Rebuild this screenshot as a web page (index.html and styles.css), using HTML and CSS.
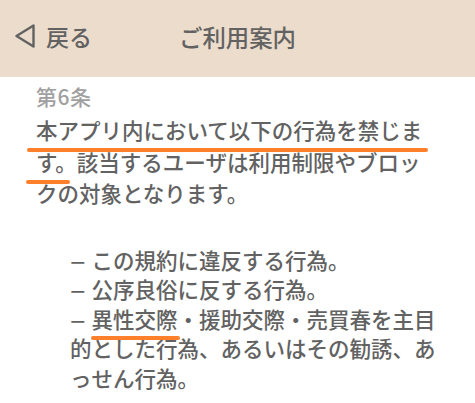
FILE: index.html
```html
<!DOCTYPE html>
<html lang="ja">
<head>
<meta charset="utf-8">
<link rel="stylesheet" href="styles.css">
</head>
<body>
<div class="screen">
  <header class="bar">
    <div class="back">
      <svg class="back-icon" width="22" height="26" viewBox="0 0 22 26"><path d="M19.5 2.5 L2.5 13 L19.5 23.5 Z" fill="none" stroke="#626262" stroke-width="2.4" stroke-linejoin="round"/></svg>
      <span class="back-label">戻る</span>
    </div>
    <div class="title">ご利用案内</div>
  </header>
  <main class="content">
    <div class="article-no">第6条</div>
    <p class="para">本アプリ内において以下の行為を禁じます。該当するユーザは利用制限やブロックの対象となります。</p>
    <ul class="items">
      <li><span class="dash"><span class="dash-glyph">–</span></span>この規約に違反する行為。</li>
      <li><span class="dash"><span class="dash-glyph">–</span></span>公序良俗に反する行為。</li>
      <li><span class="dash"><span class="dash-glyph">–</span></span>異性交際・援助交際・売買春を主目的とした行為、あるいはその勧誘、あっせん行為。</li>
    </ul>
    <span class="mark mark-1"></span>
    <span class="mark mark-2"></span>
    <span class="mark mark-3"></span>
  </main>
</div>
</body>
</html>
```

FILE: styles.css
```css
html, body {
  margin: 0;
  padding: 0;
  background: #ffffff;
}
body {
  font-family: "Noto Sans CJK JP", "Noto Sans", sans-serif;
  color: #626262;
}
.screen {
  width: 475px;
  height: 403px;
  overflow: hidden;
}
.bar {
  height: 77px;
  background: #ecdccc;
  display: flex;
  align-items: center;
  position: relative;
}
.back {
  display: flex;
  align-items: center;
  gap: 10px;
  padding-left: 14px;
  margin-top: -5px;
}
.back-icon {
  display: block;
  flex: none;
}
.back-label {
  font-size: 23px;
  line-height: 1;
  color: #626262;
  font-weight: 500;
}
.title {
  position: absolute;
  left: 0;
  right: 0;
  top: 0;
  bottom: 0;
  display: flex;
  align-items: center;
  justify-content: center;
  font-size: 23.4px;
  color: #626262;
  font-weight: 500;
  margin-top: -4px;
  pointer-events: none;
}
.content {
  position: relative;
  padding: 5px 0 0 36px;
  width: 395px;
  font-weight: 500;
}
.article-no {
  font-size: 21px;
  line-height: 28px;
  color: #a0a0a0;
  letter-spacing: 0.5px;
}
.para {
  margin: 4px 0 0 0;
  font-size: 21.5px;
  line-height: 31.5px;
}
.items {
  list-style: none;
  margin: 36px 0 0 34px;
  padding: 0;
  width: 370px;
  font-size: 21.5px;
  line-height: 29.5px;
}
.dash {
  display: inline-block;
  width: 1em;
}
.dash-glyph {
  display: inline-block;
  transform: scaleX(1.35);
  transform-origin: left center;
}
.mark {
  position: absolute;
  height: 4px;
  border-radius: 2px;
  background: #ff7f2a;
}
.mark-1 { left: 27px; top: 71px; width: 401px; }
.mark-2 { left: 26px; top: 103px; width: 44px; }
.mark-3 { left: 91px; top: 259px; width: 89px; }
```
